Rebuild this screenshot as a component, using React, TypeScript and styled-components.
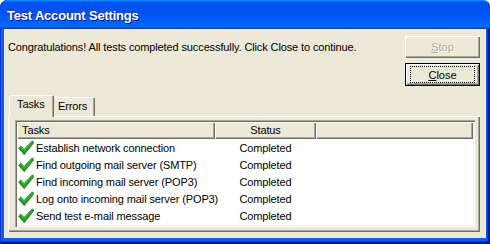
import React from 'react'
import styled, { createGlobalStyle } from 'styled-components'

const GlobalStyle = createGlobalStyle`
  html, body {
    margin: 0;
    padding: 0;
    background: #ffffff;
  }
  body {
    font-family: 'Liberation Sans', Arial, sans-serif;
    font-size: 11px;
    letter-spacing: -0.12px;
    color: #000000;
  }
`

const Window = styled.div`
  width: 490px;
  height: 244px;
  display: flex;
  flex-direction: column;
  border-radius: 8px 8px 0 0;
  overflow: hidden;
  background: #0a5ef0;
  box-shadow: inset -1px -1px #00138c, inset 1px 0 #0831d9, inset -2px -2px #001ea0,
    inset 2px 0 #166aee, inset -3px -3px #003bda, inset 3px 0 #0855dd;
`

const TitleBar = styled.div`
  height: 29px;
  flex: none;
  box-sizing: border-box;
  display: flex;
  align-items: center;
  padding: 2px 0 0 7px;
  border-radius: 8px 8px 0 0;
  background: linear-gradient(
    180deg,
    #0997ff,
    #0053ee 8%,
    #0050ee 40%,
    #06f 88%,
    #06f 93%,
    #005bff 95%,
    #003dd7 96%,
    #003dd7
  );
  color: #ffffff;
  font: bold 13px 'Liberation Sans', Arial, sans-serif;
  letter-spacing: -0.2px;
  text-shadow: 1px 1px #0f1089;
`

const Client = styled.div`
  flex: 1;
  margin: 0 4px 6px;
  background: #ece9d8;
  padding: 7px 6px 6px 4px;
  display: flex;
  flex-direction: column;
`

const TopRow = styled.div`
  display: flex;
  height: 50px;
  flex: none;
`

const Message = styled.div`
  flex: 1;
  padding: 5px 0 0 0;
  line-height: 13px;
`

const ButtonColumn = styled.div`
  display: flex;
  flex-direction: column;
  gap: 5px;
`

const Button = styled.button<{ $default?: boolean }>`
  width: 75px;
  height: 23px;
  box-sizing: border-box;
  padding: 0;
  display: flex;
  align-items: center;
  justify-content: center;
  background: #ece9d8;
  font: 11px 'Liberation Sans', Arial, sans-serif;
  color: #000000;
  border: ${({ $default }) => ($default ? '1px solid #000000' : 'none')};
  box-shadow: inset 1px 1px #ffffff, inset -1px -1px #716f64, inset -2px -2px #aca899;

  &:disabled {
    color: #aca899;
    text-shadow: 1px 1px #ffffff;
  }
`

const FocusRect = styled.span`
  display: flex;
  align-items: center;
  justify-content: center;
  width: 63px;
  height: 15px;
  border: 1px dotted #000000;
`

const TabStrip = styled.div`
  margin-top: 9px;
  height: 21px;
  flex: none;
  display: flex;
  align-items: flex-end;
  padding-left: 3px;
`

const Tab = styled.div<{ $active?: boolean; $width: number }>`
  position: relative;
  z-index: ${({ $active }) => ($active ? 2 : 1)};
  box-sizing: border-box;
  width: ${({ $width }) => $width}px;
  height: ${({ $active }) => ($active ? 22 : 19)}px;
  margin: ${({ $active }) => ($active ? '0 -2px -1px' : '0')};
  padding: 3px 0 0 ${({ $active }) => ($active ? 8 : 6)}px;
  line-height: 13px;
  background: #ece9d8;
  border-radius: 2px 2px 0 0;
  box-shadow: inset 1px 1px #ffffff, inset -1px 0 #716f64, inset -2px 0 #aca899;
`

const Panel = styled.div`
  height: 116px;
  flex: none;
  box-sizing: border-box;
  display: flex;
  padding: 4px 5px 5px 7px;
  background: #ece9d8;
  box-shadow: inset 1px 1px #ffffff, inset -1px -1px #716f64, inset -2px -2px #aca899;
`

const ListBox = styled.div`
  flex: 1;
  display: flex;
  flex-direction: column;
  padding: 2px 2px 3px;
  background: #ffffff;
  box-shadow: inset 1px 1px #aca899, inset 2px 2px #716f64, inset -1px -1px #ffffff,
    inset -2px -2px #f1efe2;
`

const Header = styled.div`
  display: flex;
  height: 17px;
  flex: none;
`

const HeaderCell = styled.div<{ $width?: number; $center?: boolean }>`
  box-sizing: border-box;
  ${({ $width }) => ($width ? `width: ${$width}px;` : 'flex: 1;')}
  padding-left: ${({ $center }) => ($center ? 0 : 5)}px;
  text-align: ${({ $center }) => ($center ? 'center' : 'left')};
  line-height: 17px;
  background: #ece9d8;
  box-shadow: inset 1px 1px #ffffff, inset -1px -1px #716f64, inset -2px -2px #aca899;
`

const Row = styled.div`
  display: flex;
  align-items: center;
  height: 17px;
`

const TaskCell = styled.div`
  width: 198px;
  flex: none;
  display: flex;
  align-items: center;
  gap: 2px;
  padding-left: 1px;
  box-sizing: border-box;
  white-space: nowrap;

  svg {
    flex: none;
  }
`

const StatusCell = styled.div`
  width: 101px;
  flex: none;
  text-align: center;
`

const CheckIcon = () => (
  <svg width="16" height="16" viewBox="0 0 16 16">
    <path
      d="M0.6 8.2 L2.8 6 L6 9.4 L14.4 0.8 L16 2.6 L6.2 14.8 Z"
      fill="#22a022"
      stroke="#0c700c"
      strokeWidth="0.7"
      strokeLinejoin="round"
    />
    <path d="M2.8 7 L6 10.4 L14.4 2" fill="none" stroke="#6fd46f" strokeWidth="0.6" />
  </svg>
)

const tasks = [
  'Establish network connection',
  'Find outgoing mail server (SMTP)',
  'Find incoming mail server (POP3)',
  'Log onto incoming mail server (POP3)',
  'Send test e-mail message'
]

export default function App() {
  return (
    <>
      <GlobalStyle />
      <Window>
        <TitleBar>Test Account Settings</TitleBar>
        <Client>
          <TopRow>
            <Message>
              Congratulations! All tests completed successfully. Click Close to continue.
            </Message>
            <ButtonColumn>
              <Button disabled>
                <u>S</u>top
              </Button>
              <Button $default>
                <FocusRect>
                  <u>C</u>lose
                </FocusRect>
              </Button>
            </ButtonColumn>
          </TopRow>
          <TabStrip>
            <Tab $active $width={45}>
              Tasks
            </Tab>
            <Tab $width={43}>Errors</Tab>
          </TabStrip>
          <Panel>
            <ListBox>
              <Header>
                <HeaderCell $width={198}>Tasks</HeaderCell>
                <HeaderCell $width={101} $center>
                  Status
                </HeaderCell>
                <HeaderCell />
              </Header>
              {tasks.map((task) => (
                <Row key={task}>
                  <TaskCell>
                    <CheckIcon />
                    {task}
                  </TaskCell>
                  <StatusCell>Completed</StatusCell>
                </Row>
              ))}
            </ListBox>
          </Panel>
        </Client>
      </Window>
    </>
  )
}
